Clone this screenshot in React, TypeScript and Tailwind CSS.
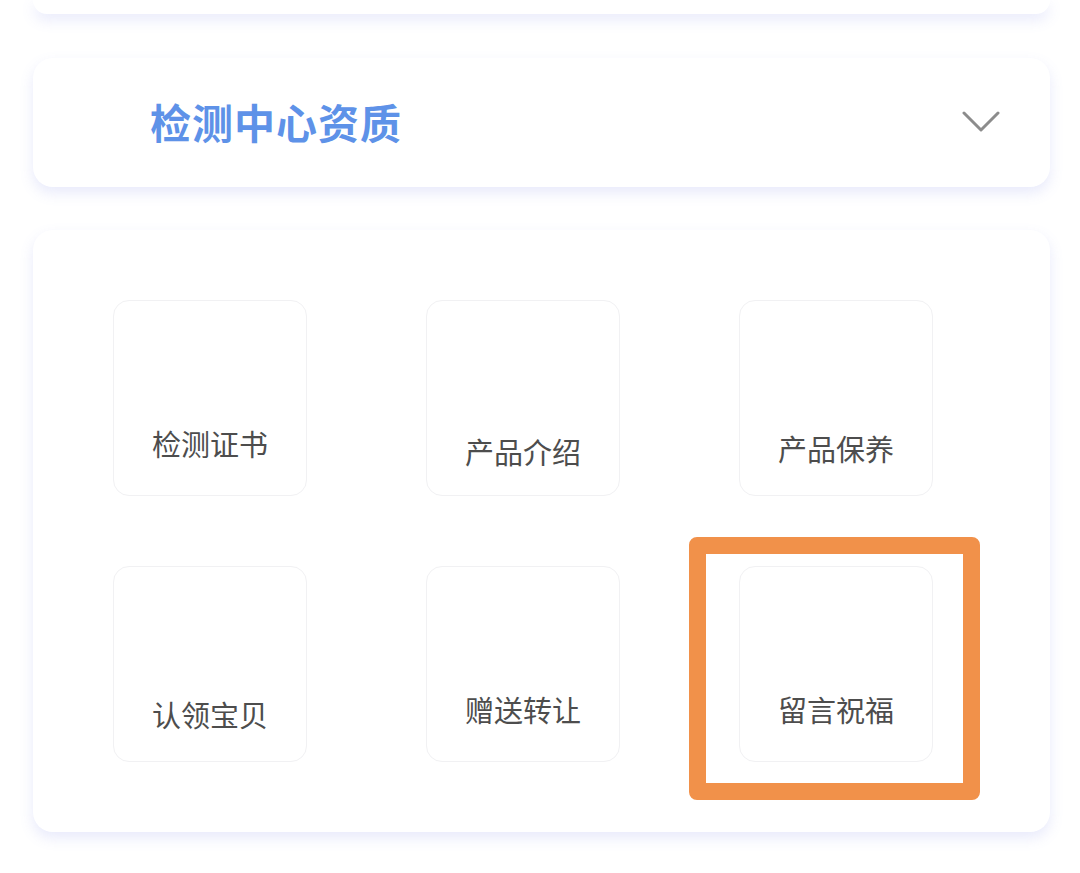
import React from "react";

const tiles = [
  { label: "检测证书", pt: "pt-[128px]" },
  { label: "产品介绍", pt: "pt-[136px]" },
  { label: "产品保养", pt: "pt-[133px]" },
  { label: "认领宝贝", pt: "pt-[133px]" },
  { label: "赠送转让", pt: "pt-[128px]" },
  { label: "留言祝福", pt: "pt-[128px]" },
];

export default function App() {
  return (
    <div
      className="relative w-[1080px] h-[873px] bg-white overflow-hidden"
      style={{ fontFamily: '"Noto Sans CJK SC", "Noto Sans", sans-serif' }}
    >
      <div className="ml-[33px] mr-[30px] flex flex-col">
        <div className="h-[14px] bg-white rounded-b-[20px] shadow-[0_6px_14px_rgba(110,125,230,0.16)]" />
        <div className="mt-[44px] h-[129px] bg-white rounded-[20px] shadow-[0_6px_14px_rgba(110,125,230,0.16)] flex items-center justify-between pl-[117px] pr-[48px]">
          <span className="text-[41px] leading-none font-bold text-[#5e92e8] tracking-[1px] mt-[-3px]">
            检测中心资质
          </span>
          <svg width="40" height="24" viewBox="0 0 40 24" className="mt-[-2px]">
            <polyline
              points="2,3 19,20 36,3"
              fill="none"
              stroke="#8c8c8c"
              strokeWidth="3"
              strokeLinecap="round"
              strokeLinejoin="round"
            />
          </svg>
        </div>
        <div className="mt-[43px] h-[602px] bg-white rounded-[20px] shadow-[0_6px_14px_rgba(110,125,230,0.16)] pt-[70px] pl-[80px]">
          <div className="grid grid-cols-[194px_194px_194px] gap-x-[119px] gap-y-[70px]">
            {tiles.map((t) => (
              <div
                key={t.label}
                className={`h-[196px] rounded-[16px] border border-[#f1f1f3] bg-white flex justify-center ${t.pt}`}
              >
                <span className="text-[29px] leading-[29px] text-[#4d4d4d]">{t.label}</span>
              </div>
            ))}
          </div>
        </div>
      </div>
      <div className="absolute left-[689px] top-[537px] w-[291px] h-[263px] border-[17px] border-[#f1914a] rounded-[8px]" />
    </div>
  );
}
